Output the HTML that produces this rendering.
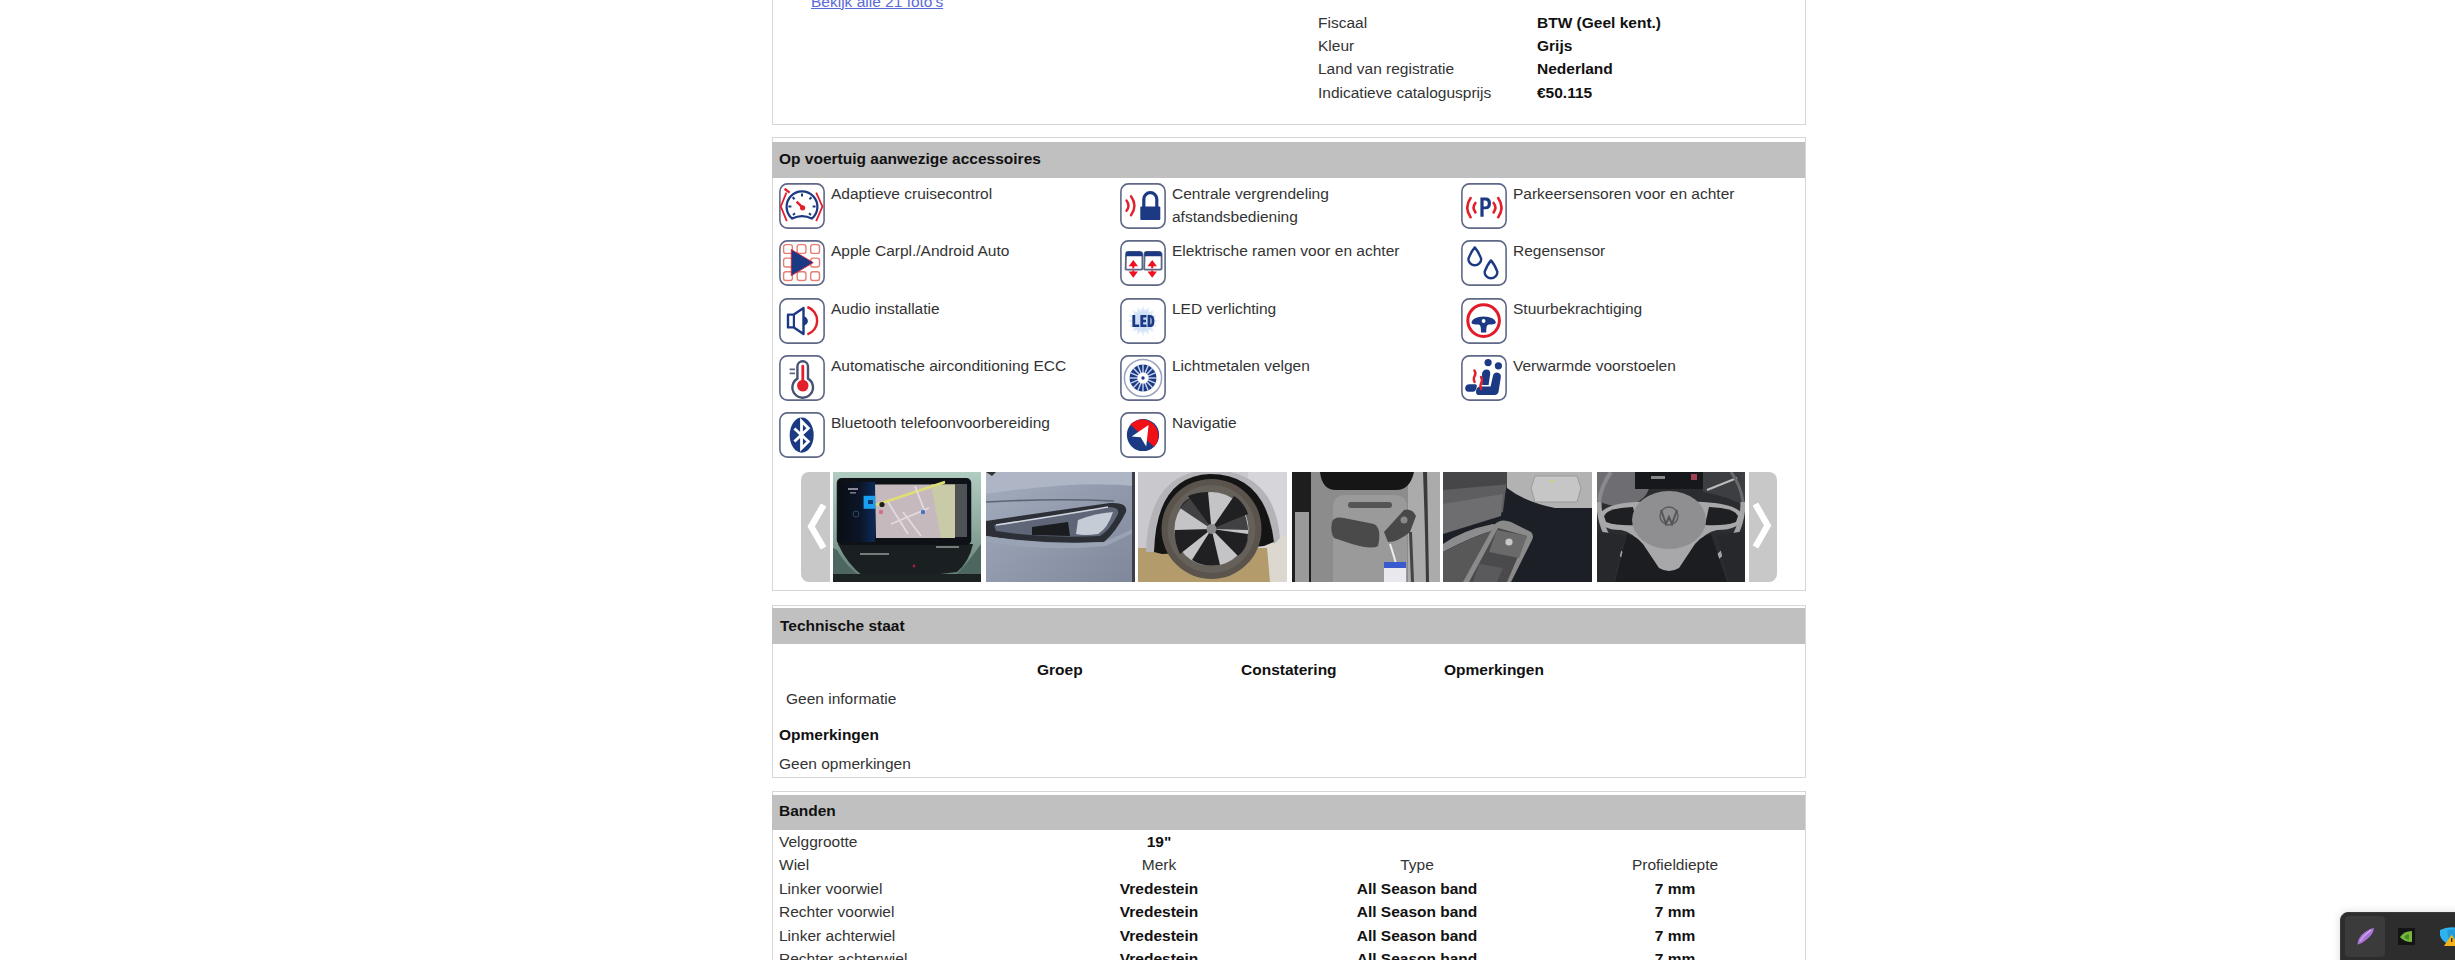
<!DOCTYPE html><html><head><meta charset="utf-8"><style>
html,body{margin:0;padding:0;background:#fff;width:2455px;height:960px;overflow:hidden;position:relative}
body{font-family:"Liberation Sans",sans-serif;font-size:15.5px;color:#333}
.t{position:absolute;white-space:nowrap;line-height:20px;font-size:15.5px;color:#333}
.b{font-weight:bold;color:#111}
.c{text-align:center}
.box{position:absolute;left:772px;width:1032px;border:1px solid #d6d6d6;box-sizing:content-box}
.hdr{position:absolute;left:772px;width:1033px;background:#c0c0c0}
.ic{position:absolute;width:46px;height:46px}
a{color:#4a5fd0}
</style></head><body>

<div class="t" style="left:811px;top:-8.5px;color:#5a6ad6;text-decoration:underline">Bekijk alle 21 foto's</div>
<div class="box" style="top:-10px;height:133px"></div>
<div class="t " style="left:1318px;top:12.6px;">Fiscaal</div>
<div class="t b" style="left:1537px;top:12.6px;">BTW (Geel kent.)</div>
<div class="t " style="left:1318px;top:35.9px;">Kleur</div>
<div class="t b" style="left:1537px;top:35.9px;">Grijs</div>
<div class="t " style="left:1318px;top:59.3px;">Land van registratie</div>
<div class="t b" style="left:1537px;top:59.3px;">Nederland</div>
<div class="t " style="left:1318px;top:82.6px;">Indicatieve catalogusprijs</div>
<div class="t b" style="left:1537px;top:82.6px;">&euro;50.115</div>
<div class="box" style="top:137px;height:452px"></div>
<div class="hdr" style="top:142px;height:36px"></div>
<div class="t b" style="left:779px;top:148.9px;">Op voertuig aanwezige accessoires</div>
<svg class="ic" style="left:779px;top:183.0px" viewBox="0 0 46 46"><rect x="0.9" y="0.9" width="44.2" height="44.2" rx="7.5" fill="#fff" stroke="#5f6887" stroke-width="1.6"/>
<path d="M13.2 35.6A15.4 15.4 0 1 1 32.8 35.6Q23 30.6 13.2 35.6Z" fill="none" stroke="#1c3a84" stroke-width="2.3" stroke-linejoin="round"/>
<path d="M23 10.4v3M9.4 23.5h3M33.6 23.5h3M13.6 14.2l2 2M32.4 14.2l-2 2M14 32l2-1.8M32 32l-2-1.8" stroke="#1c3a84" stroke-width="2"/>
<path d="M17.6 18.6L23.4 24.4" stroke="#e21f2b" stroke-width="2.4"/><circle cx="23.6" cy="24.8" r="2.6" fill="#e21f2b"/>
<path d="M7.8 38.2L1.8 23.5L7.4 9.6" fill="none" stroke="#e21f2b" stroke-width="1.8"/>
<path d="M5.6 5.8L10.6 9.6" stroke="#e21f2b" stroke-width="2.4"/>
<path d="M37.2 9.6L43.4 23.5L37.2 38.2" fill="none" stroke="#e21f2b" stroke-width="1.8"/>
</svg>
<div class="t " style="left:831px;top:184.1px;">Adaptieve cruisecontrol</div>
<svg class="ic" style="left:779px;top:240.25px" viewBox="0 0 46 46"><rect x="0.9" y="0.9" width="44.2" height="44.2" rx="7.5" fill="#fff" stroke="#5f6887" stroke-width="1.6"/><rect x="4.60" y="4.60" width="8.8" height="8.8" rx="2.2" fill="none" stroke="#e57f72" stroke-width="1.4"/><rect x="18.15" y="4.60" width="8.8" height="8.8" rx="2.2" fill="none" stroke="#e57f72" stroke-width="1.4"/><rect x="31.70" y="4.60" width="8.8" height="8.8" rx="2.2" fill="none" stroke="#e57f72" stroke-width="1.4"/><rect x="4.60" y="18.15" width="8.8" height="8.8" rx="2.2" fill="none" stroke="#e57f72" stroke-width="1.4"/><rect x="18.15" y="18.15" width="8.8" height="8.8" rx="2.2" fill="none" stroke="#e57f72" stroke-width="1.4"/><rect x="31.70" y="18.15" width="8.8" height="8.8" rx="2.2" fill="none" stroke="#e57f72" stroke-width="1.4"/><rect x="4.60" y="31.70" width="8.8" height="8.8" rx="2.2" fill="none" stroke="#e57f72" stroke-width="1.4"/><rect x="18.15" y="31.70" width="8.8" height="8.8" rx="2.2" fill="none" stroke="#e57f72" stroke-width="1.4"/><rect x="31.70" y="31.70" width="8.8" height="8.8" rx="2.2" fill="none" stroke="#e57f72" stroke-width="1.4"/><path d="M12.3 9.6L34.2 22.6L12.3 35.6Z" fill="#1c3a84" stroke="#c02840" stroke-width="1"/></svg>
<div class="t " style="left:831px;top:241.3px;">Apple Carpl./Android Auto</div>
<svg class="ic" style="left:779px;top:297.5px" viewBox="0 0 46 46"><rect x="0.9" y="0.9" width="44.2" height="44.2" rx="7.5" fill="#fff" stroke="#5f6887" stroke-width="1.6"/>
<path d="M9 16.6H14.9L24.5 10V36L14.9 29.4H9Z" fill="none" stroke="#1c3a84" stroke-width="2.4" stroke-linejoin="round"/>
<path d="M14.9 16.6V29.4" stroke="#1c3a84" stroke-width="2.2"/>
<path d="M24.5 18.6A4.4 4.4 0 0 1 24.5 27.4Z" fill="#1c3a84"/>
<path d="M28.4 9A14.5 14.5 0 0 1 28.4 36.4" fill="none" stroke="#e21f2b" stroke-width="2.4"/>
</svg>
<div class="t " style="left:831px;top:298.6px;">Audio installatie</div>
<svg class="ic" style="left:779px;top:354.75px" viewBox="0 0 46 46"><rect x="0.9" y="0.9" width="44.2" height="44.2" rx="7.5" fill="#fff" stroke="#5f6887" stroke-width="1.6"/>
<path d="M18.4 23.6V11.6A5.3 5.3 0 0 1 29 11.6V23.6A10.3 10.3 0 1 1 18.4 23.6Z" fill="#fff" stroke="#475174" stroke-width="2.4"/>
<path d="M22.4 11.2A1.4 1.4 0 0 1 25.2 11.2V25A5.8 5.8 0 1 1 22.4 25Z" fill="#e21f2b"/>
<path d="M10.6 14.4H16M10.6 18.4H16" stroke="#5c6685" stroke-width="1.6"/>
</svg>
<div class="t " style="left:831px;top:355.9px;">Automatische airconditioning ECC</div>
<svg class="ic" style="left:779px;top:412.0px" viewBox="0 0 46 46"><rect x="0.9" y="0.9" width="44.2" height="44.2" rx="7.5" fill="#fff" stroke="#5f6887" stroke-width="1.6"/>
<ellipse cx="22.7" cy="23.1" rx="12" ry="17.6" fill="#1c3a84"/>
<path d="M15.4 16.4L29.4 29.6L22.5 36.4V9.2L29.4 16.2L15.4 29.6" fill="none" stroke="#fff" stroke-width="2.8" stroke-linejoin="miter"/>
</svg>
<div class="t " style="left:831px;top:413.1px;">Bluetooth telefoonvoorbereiding</div>
<svg class="ic" style="left:1120px;top:183.0px" viewBox="0 0 46 46"><rect x="0.9" y="0.9" width="44.2" height="44.2" rx="7.5" fill="#fff" stroke="#5f6887" stroke-width="1.6"/>
<rect x="20.3" y="23.5" width="20" height="13.6" rx="1" fill="#1c3a84"/>
<path d="M23.8 24V16.2A6.5 6.5 0 0 1 36.8 16.2V24" fill="none" stroke="#1c3a84" stroke-width="3.2"/>
<path d="M6.5 17.4Q10.4 22.5 6.5 27.8" fill="none" stroke="#e21f2b" stroke-width="2.4" stroke-linecap="round"/>
<path d="M11 13.2Q17.8 22.5 11 32.2" fill="none" stroke="#e21f2b" stroke-width="2.4" stroke-linecap="round"/>
</svg>
<div class="t " style="left:1172px;top:184.1px;">Centrale vergrendeling</div>
<div class="t " style="left:1172px;top:207.1px;">afstandsbediening</div>
<svg class="ic" style="left:1120px;top:240.25px" viewBox="0 0 46 46"><rect x="0.9" y="0.9" width="44.2" height="44.2" rx="7.5" fill="#fff" stroke="#5f6887" stroke-width="1.6"/>
<path d="M5.6 29.4L6 14.4Q6 12 8.6 12H19.6Q22.4 12 22.4 14.8V28Q22.4 29.6 20.8 29.6H6.8Q5.6 29.6 5.6 29.4Z" fill="none" stroke="#5c6685" stroke-width="1.8"/>
<path d="M24.2 29.4L24.6 14.4Q24.6 12 27.2 12H38.6Q41.6 12 41.6 14.8V28Q41.6 29.6 40 29.6H25.4Q24.2 29.6 24.2 29.4Z" fill="none" stroke="#5c6685" stroke-width="1.8"/>
<path d="M6 12.6Q6 11.4 8.6 11.4H19.6Q22.4 11.4 22.4 14V16.2H6Z" fill="#1c3a84"/>
<path d="M24.6 12.6Q24.6 11.4 27.2 11.4H38.6Q41.6 11.4 41.6 14V16.2H24.6Z" fill="#1c3a84"/>
<path d="M13.3 20L18 26.2H8.6Z M8.6 31.4H18L13.3 37.8Z M12.3 25H14.3V28.2H12.3Z M12.3 30.4H14.3V32H12.3Z" fill="#f01020"/>
<path d="M32.2 20L36.9 26.2H27.5Z M27.5 31.4H36.9L32.2 37.8Z M31.2 25H33.2V28.2H31.2Z M31.2 30.4H33.2V32H31.2Z" fill="#f01020"/>
</svg>
<div class="t " style="left:1172px;top:241.3px;">Elektrische ramen voor en achter</div>
<svg class="ic" style="left:1120px;top:297.5px" viewBox="0 0 46 46"><rect x="0.9" y="0.9" width="44.2" height="44.2" rx="7.5" fill="#fff" stroke="#5f6887" stroke-width="1.6"/>
<defs><radialGradient id="ledg"><stop offset="0" stop-color="#c2d6f2"/><stop offset="0.6" stop-color="#d6e4f6"/><stop offset="1" stop-color="#f4f8fd"/></radialGradient></defs>
<polygon points="39.00,23.00 33.30,25.05 37.78,29.12 31.73,28.83 34.31,34.31 28.83,31.73 29.12,37.78 25.05,33.30 23.00,39.00 20.95,33.30 16.88,37.78 17.17,31.73 11.69,34.31 14.27,28.83 8.22,29.12 12.70,25.05 7.00,23.00 12.70,20.95 8.22,16.88 14.27,17.17 11.69,11.69 17.17,14.27 16.88,8.22 20.95,12.70 23.00,7.00 25.05,12.70 29.12,8.22 28.83,14.27 34.31,11.69 31.73,17.17 37.78,16.88 33.30,20.95" fill="url(#ledg)"/>
<path d="M12.4 17H15.2V26.6H19.2V29H12.4Z" fill="#1c3a84"/>
<path d="M20.4 17H26.4V19.4H23.2V21.8H26V24.2H23.2V26.6H26.6V29H20.4Z" fill="#1c3a84"/>
<path d="M27.6 17H30.4Q34.4 17 34.4 23Q34.4 29 30.4 29H27.6Z M30.4 19.4V26.6Q31.6 26.6 31.6 23Q31.6 19.4 30.4 19.4Z" fill="#1c3a84" fill-rule="evenodd"/>
</svg>
<div class="t " style="left:1172px;top:298.6px;">LED verlichting</div>
<svg class="ic" style="left:1120px;top:354.75px" viewBox="0 0 46 46"><rect x="0.9" y="0.9" width="44.2" height="44.2" rx="7.5" fill="#fff" stroke="#5f6887" stroke-width="1.6"/>
<circle cx="23" cy="23" r="18.6" fill="none" stroke="#9aa3bc" stroke-width="1.5"/>
<circle cx="23" cy="23" r="13.4" fill="#1c3a84"/>
<line x1="28.00" y1="23.00" x2="37.00" y2="23.00" stroke="#c8d4f0" stroke-width="1.4"/><line x1="27.62" y1="24.91" x2="35.93" y2="28.36" stroke="#c8d4f0" stroke-width="1.4"/><line x1="26.54" y1="26.54" x2="32.90" y2="32.90" stroke="#c8d4f0" stroke-width="1.4"/><line x1="24.91" y1="27.62" x2="28.36" y2="35.93" stroke="#c8d4f0" stroke-width="1.4"/><line x1="23.00" y1="28.00" x2="23.00" y2="37.00" stroke="#c8d4f0" stroke-width="1.4"/><line x1="21.09" y1="27.62" x2="17.64" y2="35.93" stroke="#c8d4f0" stroke-width="1.4"/><line x1="19.46" y1="26.54" x2="13.10" y2="32.90" stroke="#c8d4f0" stroke-width="1.4"/><line x1="18.38" y1="24.91" x2="10.07" y2="28.36" stroke="#c8d4f0" stroke-width="1.4"/><line x1="18.00" y1="23.00" x2="9.00" y2="23.00" stroke="#c8d4f0" stroke-width="1.4"/><line x1="18.38" y1="21.09" x2="10.07" y2="17.64" stroke="#c8d4f0" stroke-width="1.4"/><line x1="19.46" y1="19.46" x2="13.10" y2="13.10" stroke="#c8d4f0" stroke-width="1.4"/><line x1="21.09" y1="18.38" x2="17.64" y2="10.07" stroke="#c8d4f0" stroke-width="1.4"/><line x1="23.00" y1="18.00" x2="23.00" y2="9.00" stroke="#c8d4f0" stroke-width="1.4"/><line x1="24.91" y1="18.38" x2="28.36" y2="10.07" stroke="#c8d4f0" stroke-width="1.4"/><line x1="26.54" y1="19.46" x2="32.90" y2="13.10" stroke="#c8d4f0" stroke-width="1.4"/><line x1="27.62" y1="21.09" x2="35.93" y2="17.64" stroke="#c8d4f0" stroke-width="1.4"/>
<circle cx="23" cy="23" r="5.6" fill="#fff"/>
<circle cx="23" cy="23" r="1.7" fill="#1c3a84"/>
</svg>
<div class="t " style="left:1172px;top:355.9px;">Lichtmetalen velgen</div>
<svg class="ic" style="left:1120px;top:412.0px" viewBox="0 0 46 46"><rect x="0.9" y="0.9" width="44.2" height="44.2" rx="7.5" fill="#fff" stroke="#5f6887" stroke-width="1.6"/>
<circle cx="23" cy="23" r="16.1" fill="#1c3a84"/>
<path d="M10.4 12.6A16.1 16.1 0 0 1 34 34.8Z" fill="#f01018"/>
<path d="M28.6 13L11.6 24.6L20.6 25.2L26.2 34.6Z" fill="#fff"/>
</svg>
<div class="t " style="left:1172px;top:413.1px;">Navigatie</div>
<svg class="ic" style="left:1461px;top:183.0px" viewBox="0 0 46 46"><rect x="0.9" y="0.9" width="44.2" height="44.2" rx="7.5" fill="#fff" stroke="#5f6887" stroke-width="1.6"/>
<path d="M19.4 33.8V14.6H24.6Q30 14.6 30 20.4Q30 26.2 24.6 26.2H22.6V33.8Z M22.6 17.4V23.4H24.2Q26.8 23.4 26.8 20.4Q26.8 17.4 24.2 17.4Z" fill="#1c3a84" fill-rule="evenodd"/>
<path d="M9.6 15Q3 24.5 9.6 34.2" fill="none" stroke="#e21f2b" stroke-width="2.6" stroke-linecap="round"/>
<path d="M14.4 20Q10.8 24.6 14.4 29.4" fill="none" stroke="#e21f2b" stroke-width="2.6" stroke-linecap="round"/>
<path d="M37.2 15Q43.8 24.5 37.2 34.2" fill="none" stroke="#e21f2b" stroke-width="2.6" stroke-linecap="round"/>
<path d="M32.6 20Q36.2 24.6 32.6 29.4" fill="none" stroke="#e21f2b" stroke-width="2.6" stroke-linecap="round"/>
</svg>
<div class="t " style="left:1513px;top:184.1px;">Parkeersensoren voor en achter</div>
<svg class="ic" style="left:1461px;top:240.25px" viewBox="0 0 46 46"><rect x="0.9" y="0.9" width="44.2" height="44.2" rx="7.5" fill="#fff" stroke="#5f6887" stroke-width="1.6"/><path d="M13.8 7.4Q17.32 11.425 20.200000000000003 18.9A6.4 6.4 0 1 1 7.4 18.9Q10.280000000000001 11.425 13.8 7.4Z" fill="none" stroke="#1c3a84" stroke-width="2.4" stroke-linejoin="round"/><path d="M30 20.4Q33.52 24.424999999999997 36.4 31.9A6.4 6.4 0 1 1 23.6 31.9Q26.48 24.424999999999997 30 20.4Z" fill="none" stroke="#1c3a84" stroke-width="2.4" stroke-linejoin="round"/></svg>
<div class="t " style="left:1513px;top:241.3px;">Regensensor</div>
<svg class="ic" style="left:1461px;top:297.5px" viewBox="0 0 46 46"><rect x="0.9" y="0.9" width="44.2" height="44.2" rx="7.5" fill="#fff" stroke="#5f6887" stroke-width="1.6"/>
<circle cx="22.6" cy="22.6" r="15.8" fill="none" stroke="#e31a28" stroke-width="3"/>
<path d="M10.4 24.6Q11.6 19 22.6 18.6Q33.6 19 35 24.6Q34 27.2 28 26.4Q25.6 26.8 25.4 30L25.2 34.4H20L19.8 30Q19.6 26.8 17.2 26.4Q11 27.2 10.4 24.6Z" fill="#1c3a84"/>
<circle cx="22.6" cy="23" r="1.9" fill="#fff"/>
</svg>
<div class="t " style="left:1513px;top:298.6px;">Stuurbekrachtiging</div>
<svg class="ic" style="left:1461px;top:354.75px" viewBox="0 0 46 46"><rect x="0.9" y="0.9" width="44.2" height="44.2" rx="7.5" fill="#fff" stroke="#5f6887" stroke-width="1.6"/>
<circle cx="27.1" cy="7.6" r="3.6" fill="#1c3a84"/>
<circle cx="37.4" cy="10.8" r="3.6" fill="#1c3a84"/>
<path d="M21 19Q21.6 14.4 25.6 14.4Q29.6 14.6 29.2 19L27.6 30H21.2Z" fill="#1c3a84"/>
<path d="M31.8 21.6Q32.4 17.6 36 17.6Q40.2 18 39.8 22.4L37.6 36.6Q37 40 33.6 40H18.4Q14.8 40 15 36.4Q15.4 31.4 19.6 31.4H29.6Z" fill="#1c3a84"/>
<path d="M4.2 33.6Q4.2 29.2 8.6 29.2H14.6Q16.2 29.4 15.8 31.4L15 34.6Q14.2 36.8 12 36.8H7.4Q4.2 36.6 4.2 33.6Z" fill="#1c3a84"/>
<path d="M13.4 15.4Q15.4 18 13.6 21Q12 24 13.6 27" fill="none" stroke="#e21f2b" stroke-width="2.4" stroke-linecap="round"/>
<path d="M20 22Q21.8 25 20.2 28Q18.6 31 20.2 34" fill="none" stroke="#e21f2b" stroke-width="2.4" stroke-linecap="round"/>
</svg>
<div class="t " style="left:1513px;top:355.9px;">Verwarmde voorstoelen</div>
<svg style="position:absolute;left:801px;top:472px" width="29" height="110" viewBox="0 0 29 110"><path d="M8 0H29V110H8A8 8 0 0 1 0 102V8A8 8 0 0 1 8 0Z" fill="#c8c8c8"/><path d="M22.6 33L10.2 54.5L22.6 76" fill="none" stroke="#fff" stroke-width="6.4" stroke-linejoin="miter"/></svg>
<svg style="position:absolute;left:1749px;top:472px" width="28" height="110" viewBox="0 0 28 110"><path d="M0 0H20A8 8 0 0 1 28 8V102A8 8 0 0 1 20 110H0Z" fill="#c8c8c8"/><path d="M6.4 32L18.6 53.5L6.4 75" fill="none" stroke="#fff" stroke-width="6.4" stroke-linejoin="miter"/></svg>
<!-- photo1 infotainment -->
<svg style="position:absolute;left:833px;top:472px" width="148" height="110" viewBox="0 0 148 110">
<defs><linearGradient id="p1bg" x1="0" y1="0" x2="0" y2="1"><stop offset="0" stop-color="#b2ccc2"/><stop offset="0.5" stop-color="#8eaaa0"/><stop offset="1" stop-color="#5e7a72"/></linearGradient>
<linearGradient id="p1sb" x1="0" y1="0" x2="1" y2="0"><stop offset="0" stop-color="#0a0e16"/><stop offset="0.6" stop-color="#0c1628"/><stop offset="1" stop-color="#0a2a5a"/></linearGradient></defs>
<rect width="148" height="110" fill="url(#p1bg)"/>
<path d="M4 78Q14 96 30 106L124 102Q134 92 148 72V110H0V76Z" fill="#4e6660"/>
<path d="M5 72H140Q136 90 124 100Q80 106 30 104Q14 92 5 72Z" fill="#1a2022"/>
<rect x="3.75" y="6" width="134.5" height="67" rx="5" fill="#0e1216"/>
<rect x="0" y="102" width="148" height="8" fill="#1c2222"/>
<rect x="6" y="10" width="36" height="60" fill="url(#p1sb)"/>
<rect x="30.6" y="23.8" width="11.8" height="13" fill="#1aa0f0"/>
<rect x="35" y="28" width="5" height="4" fill="#0a3a70"/>
<rect x="15" y="16" width="10" height="2" fill="#889"/><rect x="17" y="20" width="6" height="1.6" fill="#778"/>
<circle cx="23" cy="42" r="3" fill="none" stroke="#2a4a6a" stroke-width="1"/>
<path d="M42 12.5H122V66H43Z" fill="#c6b9be"/>
<path d="M98 12.5H122V66H108Z" fill="#c9cba8"/>
<path d="M43 33L112 10" stroke="#dede72" stroke-width="2.6"/>
<path d="M55 30L75 62M70 40L88 64M58 52L96 36M82 14L92 40" stroke="#e2dade" stroke-width="1.8"/>
<rect x="122" y="12" width="12" height="53" fill="#4e5254"/>
<circle cx="49" cy="32.5" r="2.6" fill="#1e1e1e"/><circle cx="90" cy="40" r="2.2" fill="#4a70c0"/>
<circle cx="48" cy="40" r="2.2" fill="#d07080"/>
<path d="M27 82H56" stroke="#7e8a86" stroke-width="1.8"/><path d="M103 75H126" stroke="#7e8a86" stroke-width="1.8"/>
<circle cx="81" cy="94" r="1.4" fill="#a02040"/>
</svg>
<!-- photo2 headlight -->
<svg style="position:absolute;left:986px;top:472px" width="149" height="110" viewBox="0 0 149 110">
<defs><linearGradient id="p2bg" x1="0" y1="0" x2="1" y2="1"><stop offset="0" stop-color="#a4adbe"/><stop offset="1" stop-color="#7f889b"/></linearGradient></defs>
<rect width="149" height="110" fill="url(#p2bg)"/>
<path d="M0 0H149V14Q90 8 0 22Z" fill="#aeb6c6"/>
<path d="M0 0H10L6 4Z" fill="#333"/>
<path d="M0 30Q70 26 128 29" stroke="#5c6474" stroke-width="1.6" fill="none"/>
<path d="M0 49Q60 40 124 31Q142 30 140 40Q130 60 118 70Q60 73 0 64Z" fill="#2c2f36"/>
<path d="M8 53Q70 44 122 35Q134 35 132 42Q124 58 114 64Q60 67 10 59Z" fill="#5e6677"/>
<path d="M10 53Q70 44 122 35" stroke="#d0d6e0" stroke-width="1.6" fill="none"/>
<path d="M92 48Q110 41 127 40Q122 56 112 62Q98 64 90 62Z" fill="#c6ccd6"/>
<path d="M46 55L82 50L84 64L46 63Z" fill="#1a1c20"/>
<path d="M0 64Q60 74 118 70L149 56V60L120 74Q60 80 0 70Z" fill="#9aa3b4"/>
<rect x="146" y="0" width="3" height="110" fill="#3c4048"/>
</svg>
<!-- photo3 wheel -->
<svg style="position:absolute;left:1138px;top:472px" width="149" height="110" viewBox="0 0 149 110">
<rect width="149" height="110" fill="#c9c9cd"/>
<rect x="110" y="0" width="39" height="110" fill="#d6d6da"/>
<rect x="0" y="76" width="149" height="34" fill="#b39b6c"/>
<path d="M128 64H149V110H132Z" fill="#dcd8d0"/>
<path d="M8 80Q10 0 72 -2Q136 -2 142 66L136 72Q130 8 72 6Q16 8 16 80Z" fill="#b4b4b8"/>
<path d="M16 80Q18 4 72 2Q128 2 136 70L126 74Q76 80 24 82Z" fill="#141414"/>
<circle cx="73.5" cy="57" r="50" fill="#5a544c"/>
<circle cx="73.5" cy="57" r="44" fill="#66605a"/>
<circle cx="73.5" cy="57" r="37" fill="#c4c4c6"/>
<g fill="#202022">
<path d="M73.5 57L50 24Q60 20 70 20Z"/><path d="M73.5 57L96 24Q106 30 110 42Z"/><path d="M73.5 57L110 62Q110 76 100 84Z"/><path d="M73.5 57L82 93Q66 96 54 88Z"/><path d="M73.5 57L42 82Q36 70 37 58Z"/>
<path d="M73.5 57L42 36Q46 28 52 26Z" opacity="0.8"/><path d="M73.5 57L106 40Q110 52 110 58Z" opacity="0.8"/>
</g>
<circle cx="73.5" cy="57" r="5" fill="#8a8a8c"/>
</svg>
<!-- photo4 keys -->
<svg style="position:absolute;left:1292px;top:472px" width="148" height="110" viewBox="0 0 148 110">
<rect width="148" height="110" fill="#8c8c8c"/>
<rect x="0" y="0" width="19" height="110" fill="#1e1e1e"/>
<rect x="3" y="40" width="14" height="70" fill="#9a9a9a"/>
<rect x="116" y="0" width="32" height="110" fill="#ababab"/><path d="M131 0Q133 50 134 110H137Q136 50 135 0Z" fill="#3a3a3a"/><path d="M117 60L119 110H122L120 60Z" fill="#444"/>
<path d="M28 0H122Q118 18 104 18H44Q30 18 28 0Z" fill="#161616"/>
<path d="M41 36Q41 23 54 23H102Q115 23 115 36V110H41Z" fill="#9a9a9a"/>
<rect x="56" y="30" width="44" height="6" rx="3" fill="#555"/>
<path d="M40 50Q42 44 52 46L82 52Q90 56 86 74Q80 78 60 72L42 66Q38 60 40 50Z" fill="#4a4a4a"/>
<path d="M92 60L112 38Q120 36 124 44L118 60Q106 70 96 70Z" fill="#484848"/>
<circle cx="112" cy="48" r="3.5" fill="#888"/>
<path d="M98 72Q102 84 104 92" stroke="#eee" stroke-width="2" fill="none"/>
<rect x="92" y="90" width="22" height="20" fill="#e8e8ee"/><rect x="92" y="90" width="22" height="6" fill="#3a5ad0"/>
</svg>
<!-- photo5 door -->
<svg style="position:absolute;left:1443px;top:472px" width="149" height="110" viewBox="0 0 149 110">
<rect width="149" height="110" fill="#1c2026"/>
<path d="M0 0H66Q62 20 60 40L0 60Z" fill="#5e5e60"/>
<path d="M0 0H68V12L0 18Z" fill="#464648"/>
<path d="M0 32L60 22L58 44L0 62Z" fill="#6e6e70"/>
<path d="M0 72Q20 58 50 52Q56 52 52 58Q30 64 0 80Z" fill="#8c8c8e"/>
<path d="M0 80Q30 64 52 58L22 110H0Z" fill="#585858"/>
<path d="M64 0H149V36L112 36Q82 30 64 16Z" fill="#b2b2b2"/>
<path d="M92 4H134L138 16L134 30H92L88 16Z" fill="#c6c6c6" stroke="#9a9a9a" stroke-width="1"/>
<rect x="107" y="8" width="4" height="2" fill="#d8d080"/>
<path d="M20 110L52 52Q58 46 68 50L88 60Q92 64 88 70L68 110Z" fill="#8a8a8a"/>
<path d="M26 110L55 56L84 64L64 110Z" fill="#4a4a4c"/>
<path d="M54 58L84 64L76 86L46 80Z" fill="#6a6a6a"/>
<circle cx="66" cy="70" r="3.6" fill="#c8c8c8"/>
<path d="M36 92L60 96L54 110H30Z" fill="#5a5a5c"/>
</svg>
<!-- photo6 steering -->
<svg style="position:absolute;left:1597px;top:472px" width="148" height="110" viewBox="0 0 148 110">
<rect width="148" height="110" fill="#2a2c30"/>
<ellipse cx="22" cy="14" rx="30" ry="20" fill="#6e6e72"/>
<rect x="38" y="0" width="68" height="17" fill="#17181b"/>
<rect x="54" y="4" width="14" height="3" fill="#888"/><rect x="94" y="2" width="6" height="6" fill="#a04050"/>
<path d="M106 0H148V34Q130 24 106 20Z" fill="#3c3e42"/>
<path d="M110 18L140 6" stroke="#bbb" stroke-width="2"/>
<path d="M2 30A72 72 0 0 0 146 30" fill="none" stroke="#a4a4a6" stroke-width="5"/><path d="M14 0Q4 14 2 30" fill="none" stroke="#8a8a8c" stroke-width="4"/><path d="M134 0Q144 14 146 30" fill="none" stroke="#6a6a6c" stroke-width="3"/>
<path d="M2 44Q6 32 38 30L72 28L106 30Q142 32 146 44Q144 58 120 58Q108 60 98 74L82 98Q72 106 62 98L46 74Q36 60 24 58Q2 58 2 44Z" fill="#a8a8aa"/>
<path d="M7 44Q10 36 36 35L40 53Q20 54 9 50Z" fill="#1e1f22"/>
<path d="M141 44Q138 36 112 35L108 53Q128 54 139 50Z" fill="#1e1f22"/>
<path d="M30 62Q42 64 50 78L62 96Q72 102 82 96L94 78Q102 64 114 62L130 110H18Z" fill="#1c1d20"/>
<path d="M6 60Q20 62 28 64L16 110H0V62Z" fill="#26282c"/>
<path d="M142 60Q128 62 120 64L132 110H148V62Z" fill="#26282c"/>
<ellipse cx="72" cy="48" rx="37" ry="29" fill="#8f8f91"/>
<circle cx="72" cy="44" r="9" fill="none" stroke="#5a5a5c" stroke-width="1.4"/>
<path d="M64 38L69 52L72 45L75 52L80 38" stroke="#555" stroke-width="2" fill="none"/>
</svg>

<div class="box" style="top:605px;height:171px"></div>
<div class="hdr" style="top:608px;height:35.5px"></div>
<div class="t b" style="left:780px;top:615.8px;">Technische staat</div>
<div class="t b" style="left:1037px;top:660.1px;">Groep</div>
<div class="t b" style="left:1241px;top:660.1px;">Constatering</div>
<div class="t b" style="left:1444px;top:660.1px;">Opmerkingen</div>
<div class="t " style="left:786px;top:688.9px;">Geen informatie</div>
<div class="t b" style="left:779px;top:724.9px;">Opmerkingen</div>
<div class="t " style="left:779px;top:754.1px;">Geen opmerkingen</div>
<div class="box" style="top:791px;height:200px"></div>
<div class="hdr" style="top:795px;height:35px"></div>
<div class="t b" style="left:779px;top:801.1px;">Banden</div>
<div class="t " style="left:779px;top:832.0px;">Velggrootte</div>
<div class="t c b" style="left:1009px;top:832.0px;width:300px;">19&quot;</div>
<div class="t " style="left:779px;top:855.4px;">Wiel</div>
<div class="t c " style="left:1009px;top:855.4px;width:300px;">Merk</div>
<div class="t c " style="left:1267px;top:855.4px;width:300px;">Type</div>
<div class="t c " style="left:1525px;top:855.4px;width:300px;">Profieldiepte</div>
<div class="t " style="left:779px;top:878.8px;">Linker voorwiel</div>
<div class="t c b" style="left:1009px;top:878.8px;width:300px;">Vredestein</div>
<div class="t c b" style="left:1267px;top:878.8px;width:300px;">All Season band</div>
<div class="t c b" style="left:1525px;top:878.8px;width:300px;">7 mm</div>
<div class="t " style="left:779px;top:902.3px;">Rechter voorwiel</div>
<div class="t c b" style="left:1009px;top:902.3px;width:300px;">Vredestein</div>
<div class="t c b" style="left:1267px;top:902.3px;width:300px;">All Season band</div>
<div class="t c b" style="left:1525px;top:902.3px;width:300px;">7 mm</div>
<div class="t " style="left:779px;top:925.7px;">Linker achterwiel</div>
<div class="t c b" style="left:1009px;top:925.7px;width:300px;">Vredestein</div>
<div class="t c b" style="left:1267px;top:925.7px;width:300px;">All Season band</div>
<div class="t c b" style="left:1525px;top:925.7px;width:300px;">7 mm</div>
<div class="t " style="left:779px;top:949.1px;">Rechter achterwiel</div>
<div class="t c b" style="left:1009px;top:949.1px;width:300px;">Vredestein</div>
<div class="t c b" style="left:1267px;top:949.1px;width:300px;">All Season band</div>
<div class="t c b" style="left:1525px;top:949.1px;width:300px;">7 mm</div>
<div style="position:absolute;left:2340px;top:912px;width:140px;height:80px;background:#2d2d2d;border-radius:8px;box-shadow:0 0 8px rgba(0,0,0,0.15);border:1px solid #3a3a3a;box-sizing:border-box"></div>
<div style="position:absolute;left:2344.5px;top:916px;width:40px;height:41px;background:#3b3b3b;border-radius:4px"></div>
<svg style="position:absolute;left:2354px;top:926px" width="22" height="20" viewBox="0 0 22 20"><path d="M3.4 18.6Q4 11 11 6Q17 1.6 20 2.2Q19.6 8 12.6 13.4Q7.4 17.6 3.4 18.6Z" fill="#a874d8"/><path d="M6 15Q10 9 17 4" stroke="#d8b0f4" stroke-width="1.2" fill="none"/></svg>
<svg style="position:absolute;left:2398px;top:928px" width="17" height="17" viewBox="0 0 17 17"><rect width="17" height="17" fill="#141414"/><path d="M2 9Q6 3 14 3V14Q6 14 2 9Z" fill="#76b83c"/><path d="M6 9Q8 6 11 6V12Q8 12 6 9Z" fill="#4a8a22"/></svg>
<svg style="position:absolute;left:2439px;top:926px" width="16" height="20" viewBox="0 0 16 20"><path d="M1 4Q8 0.6 16 1.6V18H9Q2 14.4 1 9Z" fill="#2db4f0"/><path d="M8 4L16 3V16H10Z" fill="#1e8ad0" opacity="0.6"/><path d="M12.6 8.6L20 20H5Z" fill="#f2b418"/><rect x="12" y="12" width="1.4" height="4" fill="#3a2a00"/></svg>

</body></html>
